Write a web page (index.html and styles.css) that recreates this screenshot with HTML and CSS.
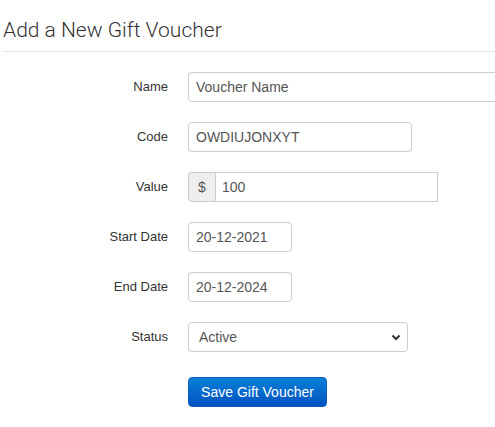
FILE: index.html
```html
<!DOCTYPE html>
<html>
<head>
<meta charset="utf-8">
<link rel="stylesheet" href="styles.css">
</head>
<body>
<div class="page">
  <h1 class="title">Add a New Gift Voucher</h1>
  <form class="form">
    <label class="label">Name</label>
    <div class="field"><input class="input input-name" type="text" value="Voucher Name"></div>

    <label class="label">Code</label>
    <div class="field"><input class="input input-code" type="text" value="OWDIUJONXYT"></div>

    <label class="label">Value</label>
    <div class="field">
      <div class="group">
        <span class="addon">$</span>
        <input class="input input-value" type="text" value="100">
      </div>
    </div>

    <label class="label">Start Date</label>
    <div class="field"><input class="input input-date" type="text" value="20-12-2021"></div>

    <label class="label">End Date</label>
    <div class="field"><input class="input input-date" type="text" value="20-12-2024"></div>

    <label class="label">Status</label>
    <div class="field">
      <div class="select-wrap">
        <select class="input select"><option>Active</option></select>
        <svg class="chev" width="10" height="7" viewBox="0 0 10 7"><path d="M1.5 1.5 L5 5 L8.5 1.5" fill="none" stroke="#333" stroke-width="2"/></svg>
      </div>
    </div>

    <span></span>
    <div class="field actions"><button type="button" class="btn">Save Gift Voucher</button></div>
  </form>
</div>
</body>
</html>
```
FILE: styles.css
```css
html, body {
  margin: 0;
  padding: 0;
  background: #fff;
  overflow: hidden;
}
.page {
  padding-left: 3px;
  width: 492px;
  height: 427px;
  overflow: hidden;
  font-family: "Liberation Sans", Arial, sans-serif;
  font-size: 14px;
  color: #333;
}
.title {
  margin: 0;
  padding-top: 16px;
  height: 35px;
  font-family: Roboto, "Liberation Sans", sans-serif;
  font-weight: 300;
  font-size: 21px;
  line-height: 28px;
  color: #333;
  border-bottom: 1px solid #e3e3e3;
}
.form {
  display: grid;
  grid-template-columns: 165px auto;
  column-gap: 20px;
  row-gap: 20px;
  padding-top: 20px;
}
.label {
  text-align: right;
  line-height: 30px;
  height: 30px;
  font-size: 13px;
  color: #333;
}
.field {
  display: flex;
  align-items: center;
}
.input {
  box-sizing: border-box;
  height: 30px;
  border: 1px solid #ccc;
  border-radius: 4px;
  padding: 0 7px;
  font-family: "Liberation Sans", Arial, sans-serif;
  font-size: 14px;
  color: #555;
  background: #fff;
  outline: none;
}
.input-name { width: 330px; }
.input-code { width: 224px; }
.input-date { width: 104px; }
.group {
  display: flex;
  width: 250px;
}
.addon {
  box-sizing: border-box;
  width: 27px;
  height: 30px;
  line-height: 28px;
  text-align: center;
  background: #eee;
  border: 1px solid #ccc;
  border-right: none;
  border-radius: 4px 0 0 4px;
  color: #555;
}
.input-value {
  flex: 1;
  border-radius: 0;
  padding-left: 6px;
}
.select-wrap {
  position: relative;
  width: 220px;
}
.select {
  width: 220px;
  -webkit-appearance: none;
  appearance: none;
  padding-left: 10px;
}
.chev {
  position: absolute;
  right: 7px;
  top: 12px;
}
.actions {
  margin-top: 5px;
}
.btn {
  box-sizing: border-box;
  width: 139px;
  height: 30px;
  border: 1px solid #0a5fc0;
  border-radius: 4px;
  background: linear-gradient(#0b80d8, #0052c0);
  color: #fff;
  font-family: "Liberation Sans", Arial, sans-serif;
  font-size: 14px;
  padding: 0;
}
```
